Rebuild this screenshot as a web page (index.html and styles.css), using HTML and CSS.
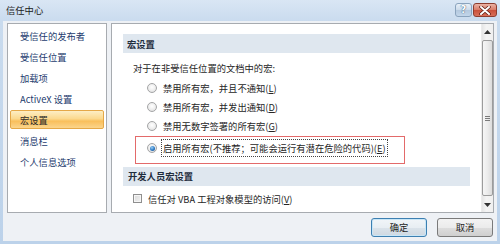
FILE: index.html
```html
<!DOCTYPE html>
<html lang="zh-CN">
<head>
<meta charset="utf-8">
<title>信任中心</title>
<link rel="stylesheet" href="styles.css">
</head>
<body>
<div class="window">
  <div class="titlebar">
    <span class="title">信任中心</span>
    <div class="controls">
      <div class="btn-help">?</div>
      <div class="btn-close">
        <svg width="12" height="9" viewBox="0 0 12 9"><path d="M2 1 L10 8 M10 1 L2 8" stroke="#5a1a10" stroke-width="3.4" stroke-linecap="round"/><path d="M2 1 L10 8 M10 1 L2 8" stroke="#ffffff" stroke-width="2" stroke-linecap="round"/></svg>
      </div>
    </div>
  </div>
  <div class="client">
    <div class="panels">
      <ul class="nav">
        <li class="nav-item"><span>受信任的发布者</span></li>
        <li class="nav-item"><span>受信任位置</span></li>
        <li class="nav-item"><span>加载项</span></li>
        <li class="nav-item"><span>ActiveX 设置</span></li>
        <li class="nav-item active"><span>宏设置</span></li>
        <li class="nav-item"><span>消息栏</span></li>
        <li class="nav-item"><span>个人信息选项</span></li>
      </ul>
      <div class="main">
        <div class="content">
          <div class="band">宏设置</div>
          <div class="intro">对于在非受信任位置的文档中的宏:</div>
          <div class="options">
            <div class="opt"><span class="radio"></span><span class="label">禁用所有宏，并且不通知(<u>L</u>)</span></div>
            <div class="opt"><span class="radio"></span><span class="label">禁用所有宏，并发出通知(<u>D</u>)</span></div>
            <div class="opt"><span class="radio"></span><span class="label">禁用无数字签署的所有宏(<u>G</u>)</span></div>
          </div>
          <div class="highlight-box">
            <div class="opt"><span class="radio checked"></span><span class="label focus">启用所有宏(不推荐；可能会运行有潜在危险的代码)(<u>E</u>)</span></div>
          </div>
          <div class="band band2">开发人员宏设置</div>
          <div class="check-row"><span class="checkbox"></span><span class="label">信任对 VBA 工程对象模型的访问(<u>V</u>)</span></div>
        </div>
        <div class="scrollbar">
          <div class="arrow up"><svg width="7" height="4" viewBox="0 0 7 4"><path d="M0 4 L3.5 0 L7 4 Z" fill="#333"/></svg></div>
          <div class="thumb"><span class="grip"></span></div>
          <div class="arrow down"><svg width="7" height="4" viewBox="0 0 7 4"><path d="M0 0 L3.5 4 L7 0 Z" fill="#333"/></svg></div>
        </div>
      </div>
    </div>
    <div class="footer">
      <button class="btn default">确定</button>
      <button class="btn">取消</button>
    </div>
  </div>
</div>
</body>
</html>
```
FILE: styles.css
```css
* { box-sizing: border-box; }
html, body { margin: 0; padding: 0; }
body {
  width: 500px;
  height: 244px;
  overflow: hidden;
  font-family: "Noto Sans CJK SC", "Noto Sans", sans-serif;
  font-size: 9.3px;
  color: #262626;
}
.window {
  width: 500px;
  height: 244px;
  background: linear-gradient(to bottom, #d9e6f4 0px, #c9dbee 22px, #bcd2ea 100%);
  padding: 0 3px 3px 3px;
  display: flex;
  flex-direction: column;
}
.titlebar {
  height: 21px;
  display: flex;
  align-items: flex-start;
  flex: none;
}
.title {
  margin-left: 3px;
  margin-top: 3px;
  line-height: 14px;
  color: #1b1b1b;
}
.controls {
  margin-left: auto;
  display: flex;
  gap: 1px;
  margin-top: 3px;
}
.btn-help {
  width: 17px;
  height: 14px;
  border: 1px solid #8aa3bd;
  border-radius: 3px;
  background: linear-gradient(to bottom, #e8f0f8 0%, #cbdaea 50%, #b3c8de 51%, #c3d6ea 100%);
  color: #fff;
  font-family: "DejaVu Sans", sans-serif;
  font-weight: bold;
  font-size: 10px;
  line-height: 12px;
  text-align: center;
  text-shadow: 0 0 1px #3c5a7a, 0 0 1px #3c5a7a;
}
.btn-close {
  width: 24px;
  height: 14px;
  border: 1px solid #8d3d2f;
  border-radius: 3px;
  background: linear-gradient(to bottom, #eab2a4 0%, #d97a66 50%, #c9503a 51%, #d8705a 100%);
  display: flex;
  align-items: center;
  justify-content: center;
}
.client {
  flex: 1;
  background: #eef1f5;
  padding: 2px 3px 0 4px;
  display: flex;
  flex-direction: column;
}
.panels {
  display: flex;
  gap: 4px;
  height: 190px;
}
.nav {
  list-style: none;
  margin: 0;
  padding: 1px 0 0 0;
  width: 100px;
  background: #fff;
  border: 1px solid #a7abb0;
}
.nav-item {
  height: 21px;
  padding: 1px 2px 1px 2px;
  color: #1c3b6e;
}
.nav-item span {
  display: flex;
  align-items: center;
  height: 19px;
  padding-left: 9px;
  border: 1px solid transparent;
  border-radius: 2px;
}
.nav-item.active span {
  border-color: #e5a847;
  background: linear-gradient(to bottom, #fdeec4 0%, #fbd98e 45%, #f9bf5c 60%, #fbd58c 100%);
  color: #2a2a2a;
}
.main {
  flex: 1;
  background: #fff;
  border: 1px solid #a7abb0;
  display: flex;
}
.content {
  flex: 1;
  padding: 10px 11px 0 11px;
}
.band {
  height: 19px;
  background: #dfe7ef;
  font-weight: bold;
  color: #1f2d3d;
  padding-left: 4px;
  display: flex;
  align-items: center;
}
.intro {
  margin-top: 5px;
  height: 20px;
  padding-left: 10px;
  display: flex;
  align-items: center;
}
.options {
  padding-left: 24px;
}
.opt {
  height: 19.3px;
  display: flex;
  align-items: center;
}
.radio {
  width: 10px;
  height: 10px;
  border-radius: 50%;
  border: 1px solid #a4a5a6;
  background: radial-gradient(circle at 50% 40%, #ffffff 0%, #efefef 50%, #d8d8d8 100%);
  flex: none;
  margin-right: 6px;
  position: relative;
}
.radio.checked::after {
  content: "";
  position: absolute;
  left: 1.5px;
  top: 1.5px;
  width: 5px;
  height: 5px;
  border-radius: 50%;
  background: radial-gradient(circle at 40% 35%, #9cd0f5 0%, #2b79c4 55%, #17447c 100%);
}
.highlight-box {
  margin-left: 12px;
  width: 270px;
  border: 1px solid #e36a6a;
  padding: 2px 0 5px 11px;
}
.highlight-box .opt { height: 19px; }
.label.focus {
  border: 1px dotted #444;
  padding: 1px 1px;
  margin-left: -2px;
  line-height: 14px;
}
.band2 {
  margin-top: 3px;
  padding-left: 5px;
}
.check-row {
  height: 26px;
  display: flex;
  align-items: center;
  padding-left: 10px;
}
.checkbox {
  width: 9px;
  height: 9px;
  border: 1px solid #8f8f8f;
  background: linear-gradient(135deg, #d9d9d9 0%, #f3f3f3 100%);
  box-shadow: inset 0 0 0 1px #f6f6f6;
  margin-right: 6px;
  flex: none;
}
.scrollbar {
  width: 12px;
  flex: none;
  display: flex;
  flex-direction: column;
  background: linear-gradient(to right, #e6e6e6 0%, #f4f4f4 40%, #f0f0f0 100%);
  border-left: 1px solid #ececec;
}
.arrow {
  height: 15px;
  display: flex;
  align-items: center;
  justify-content: center;
  flex: none;
}
.thumb {
  flex: 1;
  margin: 1px 0 1px 0;
  border: 1px solid #9c9c9c;
  border-radius: 2px;
  background: linear-gradient(to right, #f6f6f6 0%, #ececec 50%, #dcdcdc 100%);
  display: flex;
  align-items: center;
  justify-content: center;
}
.grip {
  width: 5px;
  height: 5px;
  background: repeating-linear-gradient(to bottom, #7a7a7a 0px, #7a7a7a 1px, transparent 1px, transparent 2px);
}
.footer {
  display: flex;
  justify-content: flex-end;
  gap: 10px;
  margin-top: 5px;
  padding-right: 1px;
}
.btn {
  width: 56px;
  height: 19px;
  border: 1px solid #7a7a7a;
  border-radius: 3px;
  background: linear-gradient(to bottom, #f3f3f3 0%, #ebebeb 50%, #dddddd 51%, #cfcfcf 100%);
  font-family: "Noto Sans CJK SC", sans-serif;
  font-size: 9.3px;
  color: #1e1e1e;
  padding: 0;
  line-height: 17px;
}
.btn.default {
  border-color: #3c7fb1;
  box-shadow: inset 0 0 0 1px #c8e6f7;
  background: linear-gradient(to bottom, #f1f5f8 0%, #e8eef3 50%, #dbe3ea 51%, #ced8e1 100%);
}
```
